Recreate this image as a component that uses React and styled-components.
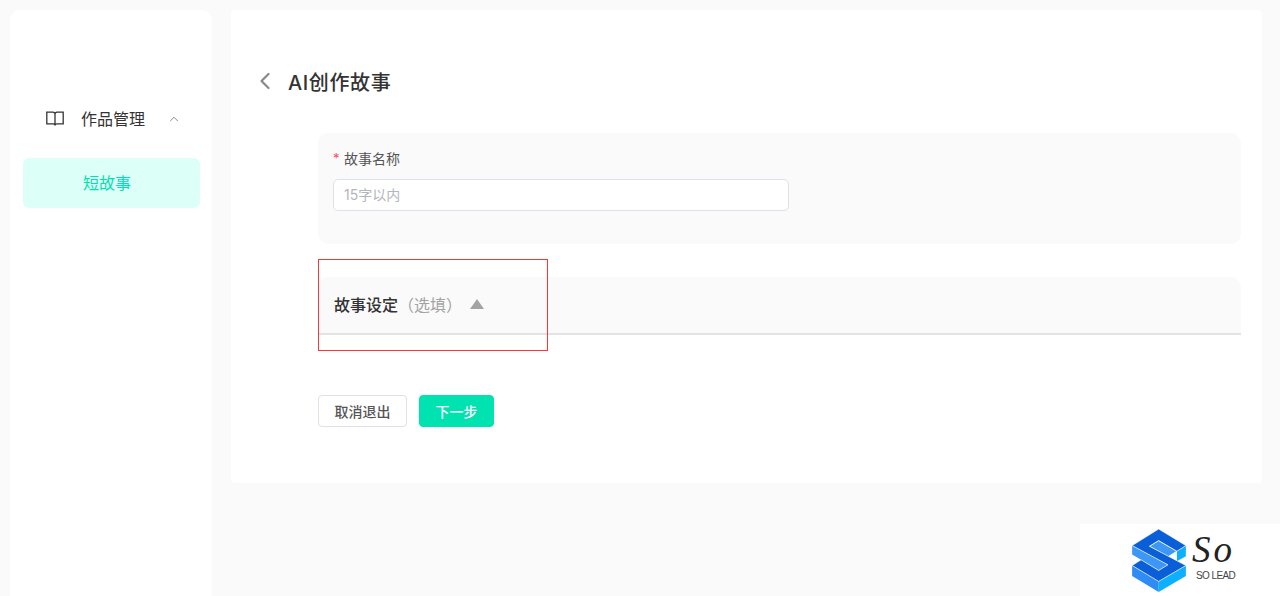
import React from "react";
import styled, { createGlobalStyle } from "styled-components";
import { ChevronLeft, ChevronUp } from "lucide-react";

const GlobalStyle = createGlobalStyle`
  html, body {
    margin: 0;
    padding: 0;
    height: 100%;
    background: #fafafa;
    overflow: hidden;
  }
  * { box-sizing: border-box; }
  body {
    font-family: "Inter", "Noto Sans CJK SC", sans-serif;
  }
`;

const Page = styled.div`
  display: flex;
  align-items: flex-start;
  gap: 19px;
  height: 596px;
  padding: 10px 18px 0 10px;
  background: #fafafa;
`;

const Sidebar = styled.aside`
  width: 202px;
  height: 586px;
  padding: 87px 12px 0 13px;
  background: #fff;
  border-radius: 10px 10px 0 0;
`;

const MenuHead = styled.div`
  display: flex;
  align-items: center;
  height: 44px;
  padding-left: 23px;
  color: #333;
  font-size: 16px;
  font-weight: 400;
`;

const MenuLabel = styled.span`
  margin: 0 22px 0 17px;
  line-height: 24px;
`;

const MenuItem = styled.div`
  display: flex;
  align-items: center;
  height: 50px;
  margin-top: 17px;
  padding: 0 0 2px 60px;
  border-radius: 6px;
  background: #dcfff7;
  color: #00e0b0;
  font-size: 16px;
  font-weight: 400;
`;

const Main = styled.main`
  width: 1031px;
  height: 473px;
  padding: 53px 21px 0 20px;
  background: #fff;
  border-radius: 4px;
`;

const TitleRow = styled.div`
  display: flex;
  align-items: center;
  gap: 9px;
  height: 36px;
  color: #333;
  font-size: 20px;
  font-weight: 500;
  letter-spacing: 0.6px;
`;

const Title = styled.h1`
  margin: 0;
  font: inherit;
`;

const FormArea = styled.div`
  margin: 34px 0 0 67px;
`;

const NameCard = styled.section`
  height: 111px;
  padding: 15px 15px 0;
  background: #fafafa;
  border-radius: 10px;
`;

const FieldLabel = styled.label`
  display: flex;
  align-items: center;
  gap: 5px;
  height: 22px;
  padding-bottom: 2px;
  color: #555;
  font-size: 14px;
`;

const Star = styled.span`
  width: 6px;
  color: #f5515f;
  font-size: 13px;
  text-align: center;
`;

const TextInput = styled.input`
  display: block;
  width: 456px;
  height: 32px;
  margin-top: 9px;
  padding: 0 10px 2px;
  background: #fff;
  border: 1px solid #dde1ea;
  border-radius: 5px;
  outline: none;
  font-family: inherit;
  font-size: 14px;
  &::placeholder {
    color: #b4b6bd;
    opacity: 1;
  }
`;

const SettingCard = styled.section`
  display: flex;
  align-items: center;
  height: 58px;
  margin-top: 33px;
  padding: 0 16px 2px;
  background: #fafafa;
  border-bottom: 2px solid #e3e3e3;
  border-radius: 10px 10px 0 0;
`;

const SettingTitle = styled.span`
  color: #333;
  font-size: 16px;
  font-weight: 500;
`;

const Optional = styled.span`
  color: #a3a3a3;
  font-size: 16px;
`;

const Triangle = styled.span`
  width: 0;
  height: 0;
  margin-left: 8px;
  border-left: 7.5px solid transparent;
  border-right: 7.5px solid transparent;
  border-bottom: 10px solid #a3a3a3;
`;

const Actions = styled.div`
  display: flex;
  gap: 12px;
  margin-top: 60px;
`;

const Button = styled.button`
  height: 32px;
  width: ${(p) => (p.$primary ? "75px" : "89px")};
  padding: 0;
  border: 1px solid ${(p) => (p.$primary ? "#00e3b0" : "#dfe0e8")};
  border-radius: 4px;
  background: ${(p) => (p.$primary ? "#00e3b0" : "#fff")};
  color: ${(p) => (p.$primary ? "#fff" : "#555")};
  font-family: inherit;
  font-size: 14px;
  font-weight: 500;
`;

const Annotation = styled.div`
  position: absolute;
  left: 318px;
  top: 259px;
  width: 230px;
  height: 92px;
  border: 1px solid #f33;
  pointer-events: none;
`;

const Watermark = styled.div`
  position: absolute;
  right: 0;
  bottom: 0;
  display: flex;
  width: 200px;
  height: 72px;
  padding: 5px 0 0 52px;
  background: #fff;
`;

const LogoSide = styled.div`
  display: flex;
  flex-direction: column;
  align-items: flex-start;
  margin-left: 5px;
`;

const LogoScript = styled.span`
  height: 36px;
  margin-top: 3px;
  color: #222;
  font-family: "Liberation Serif", serif;
  font-size: 37px;
  font-style: italic;
  letter-spacing: 3px;
  line-height: 36px;
`;

const LogoName = styled.span`
  margin: 2px 0 0 4px;
  color: #444;
  font-family: "Liberation Sans", sans-serif;
  font-size: 10px;
  letter-spacing: -0.6px;
  line-height: 12px;
`;

function BookIcon() {
  return (
    <svg width="18" height="16" viewBox="0 0 18 16" fill="none" stroke="#333" strokeWidth="1.3">
      <path d="M9 3.2C9 2 8.2 1.2 7 1.2H.8v11.6h6.4c1 0 1.8.6 1.8 1.7M9 3.2c0-1.2.8-2 2-2h6.2v11.6h-6.4c-1 0-1.8.6-1.8 1.7M9 3.2v11.3" />
    </svg>
  );
}

function LogoMark() {
  return (
    <svg width="55" height="63" viewBox="20 15 165 190">
      <polygon points="20,65 128,123 100,140 47,108 20,92" fill="#3c97f7" />
      <polygon points="182,65 182,97 155,112 155,82" fill="#0db0ff" />
      <polygon points="20,125 100,173 100,205 20,157" fill="#2f8cf5" />
      <polygon points="100,173 182,125 182,157 100,205" fill="#0db0ff" />
      <polygon points="72,67 100,50 155,82 128,99" fill="#3c97f7" stroke="#fff" strokeWidth="3" />
      <polygon
        points="100,15 182,65 155,82 100,50 72,67 182,125 100,173 20,125 47,108 100,140 128,123 20,65"
        fill="#0a5fd8"
        stroke="#fff"
        strokeWidth="2"
      />
    </svg>
  );
}

export default function App() {
  return (
    <>
      <GlobalStyle />
      <Page>
        <Sidebar>
          <MenuHead>
            <BookIcon />
            <MenuLabel>作品管理</MenuLabel>
            <ChevronUp size={14} strokeWidth={1.5} color="#777" />
          </MenuHead>
          <MenuItem>短故事</MenuItem>
        </Sidebar>
        <Main>
          <TitleRow>
            <ChevronLeft size={28} strokeWidth={1.9} color="#8a8a8a" />
            <Title>AI创作故事</Title>
          </TitleRow>
          <FormArea>
            <NameCard>
              <FieldLabel>
                <Star>*</Star>
                故事名称
              </FieldLabel>
              <TextInput placeholder="15字以内" />
            </NameCard>
            <SettingCard>
              <SettingTitle>故事设定</SettingTitle>
              <Optional>（选填）</Optional>
              <Triangle />
            </SettingCard>
            <Actions>
              <Button>取消退出</Button>
              <Button $primary>下一步</Button>
            </Actions>
          </FormArea>
        </Main>
      </Page>
      <Annotation />
      <Watermark>
        <LogoMark />
        <LogoSide>
          <LogoScript>So</LogoScript>
          <LogoName>SO LEAD</LogoName>
        </LogoSide>
      </Watermark>
    </>
  );
}
